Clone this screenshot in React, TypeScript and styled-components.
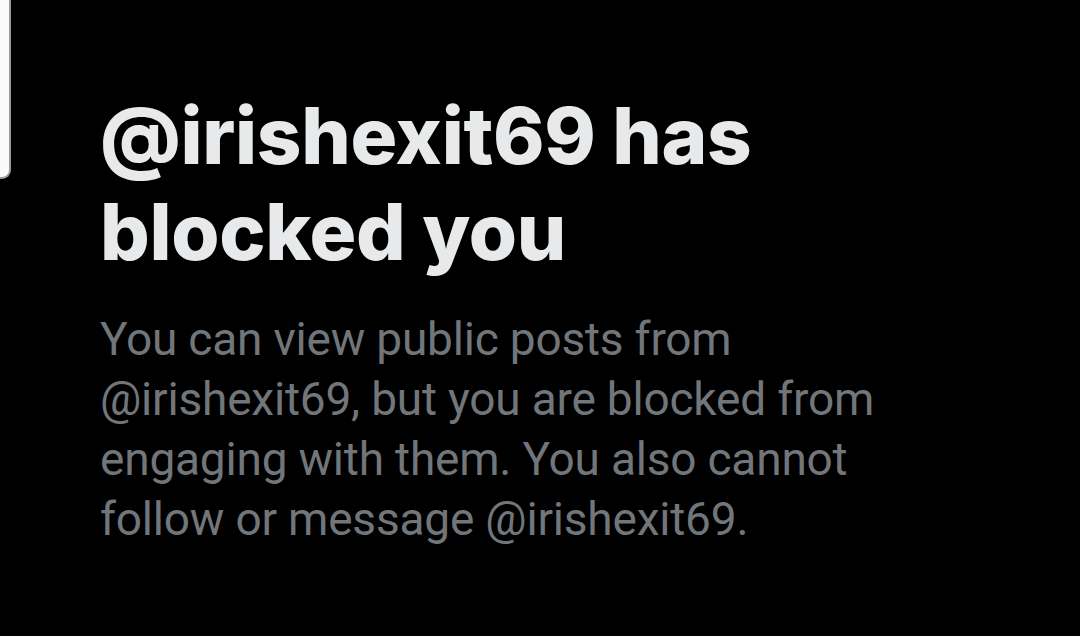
import React from "react";
import styled, { createGlobalStyle } from "styled-components";

const Global = createGlobalStyle`
  html, body { margin: 0; padding: 0; background: #000; }
  body { width: 1080px; height: 636px; overflow: hidden; }
`;

const Page = styled.div`
  display: flex;
  align-items: flex-start;
  width: 1080px;
  height: 636px;
  background: #000;
`;

const EdgeCard = styled.div`
  flex: none;
  width: 9px;
  height: 177px;
  background: #fafafa;
  border: 2px solid #9a9a9a;
  border-left: none;
  border-top: none;
  border-bottom-right-radius: 9px;
`;

const Content = styled.div`
  display: flex;
  flex-direction: column;
  padding: 88px 0 0 89px;
`;

const Title = styled.h1`
  margin: 0;
  font-family: Inter, "Liberation Sans", sans-serif;
  font-weight: 800;
  font-size: 78px;
  line-height: 96px;
  letter-spacing: -0.3px;
  color: #e7e9ea;
`;

const Body = styled.p`
  margin: 29px 0 0;
  width: 900px;
  font-family: Roboto, "Liberation Sans", sans-serif;
  font-weight: 400;
  font-size: 46px;
  line-height: 60px;
  letter-spacing: -0.2px;
  color: #71767b;
`;

export default function App() {
  return (
    <Page>
      <Global />
      <EdgeCard />
      <Content>
        <Title>
          @irishexit69 has
          <br />
          blocked you
        </Title>
        <Body>
          You can view public posts from
          <br />
          @irishexit69, but you are blocked from
          <br />
          engaging with them. You also cannot
          <br />
          follow or message @irishexit69.
        </Body>
      </Content>
    </Page>
  );
}
